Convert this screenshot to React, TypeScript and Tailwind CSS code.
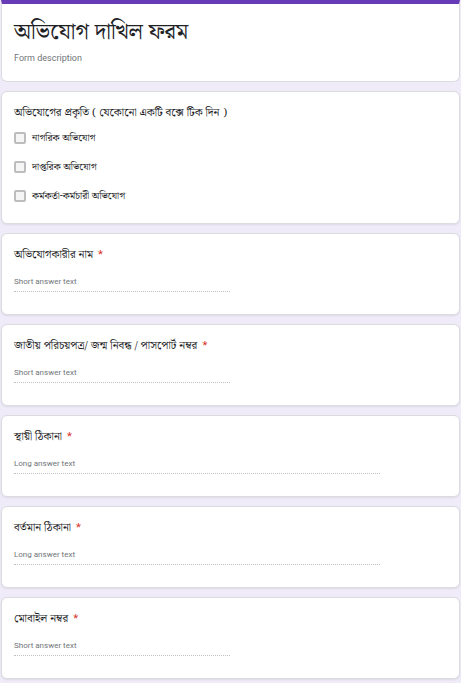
import React from "react";

const bn = { fontFamily: '"Noto Serif Bengali", "Lohit Bengali", "Noto Sans Bengali", serif' };
const ui = { fontFamily: '"Roboto", "Liberation Sans", sans-serif' };

function Card({ children, className = "" }: { children: React.ReactNode; className?: string }) {
  return (
    <div className={`bg-white rounded-[6px] border border-[#dadce0] shadow-[0_1px_2px_rgba(0,0,0,0.08)] ${className}`}>
      {children}
    </div>
  );
}

function Question({ label, long = false }: { label: string; long?: boolean }) {
  return (
    <Card className="h-[82px] px-[12px] pt-[12px]">
      <div className="text-[11.25px] leading-[18px] text-[#202124] flex items-center" style={bn}>
        <span>{label}</span>
        <span className="text-[#d93025] ml-[5px]" style={ui}>*</span>
      </div>
      <div className={`mt-[12px] ${long ? "w-[366px]" : "w-[216px]"} border-b border-dotted border-[#bdc1c6] pb-[3px] text-[8px] leading-[12px] text-[#70757a]`} style={ui}>
        {long ? "Long answer text" : "Short answer text"}
      </div>
    </Card>
  );
}

function Check({ label }: { label: string }) {
  return (
    <div className="flex items-center h-[29px]">
      <div className="w-[12px] h-[12px] rounded-[2px] border-2 border-[#bdbdbd] bg-[#f5f5f5] shrink-0" />
      <span className="ml-[6px] text-[10px] leading-[12px] text-[#202124]" style={bn}>{label}</span>
    </div>
  );
}

export default function App() {
  return (
    <div className="w-[461px] h-[683px] bg-[#f0ebf8] overflow-hidden px-[1px] flex flex-col gap-[9px]">
      <div className="bg-white rounded-b-[6px] border-x border-b border-[#dadce0] border-t-[4px] border-t-[#673ab7] h-[82px] px-[12px] pt-[10px]">
        <div className="text-[22.5px] leading-[36px] text-[#202124]" style={bn}>অভিযোগ দাখিল ফরম</div>
        <div className="mt-[2px] text-[9px] text-[#70757a]" style={ui}>Form description</div>
      </div>
      <Card className="h-[133px] px-[12px] pt-[12px]">
        <div className="text-[11.25px] leading-[18px] text-[#202124]" style={bn}>অভিযোগের প্রকৃতি ( যেকোনো একটি বক্সে টিক দিন )</div>
        <div className="mt-[1px]">
          <Check label="নাগরিক অভিযোগ" />
          <Check label="দাপ্তরিক অভিযোগ" />
          <Check label="কর্মকর্তা-কর্মচারী অভিযোগ" />
        </div>
      </Card>
      <Question label="অভিযোগকারীর নাম" />
      <Question label="জাতীয় পরিচয়পত্র/ জন্ম নিবন্ধ / পাসপোর্ট নম্বর" />
      <Question label="স্থায়ী ঠিকানা" long />
      <Question label="বর্তমান ঠিকানা" long />
      <Question label="মোবাইল নম্বর" />
    </div>
  );
}
